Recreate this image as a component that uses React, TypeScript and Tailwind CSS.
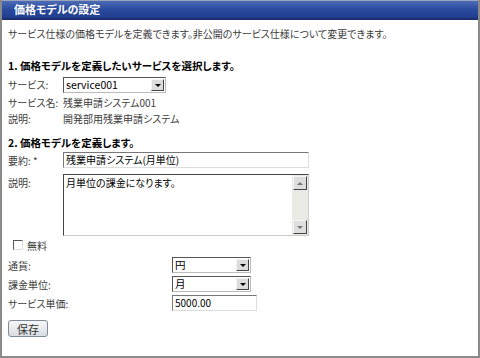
import React from "react";

const FONT = "font-['Noto_Sans_CJK_JP','Liberation_Sans',sans-serif]";

const SelectBox = ({ value, width }: { value: string; width: string }) => (
  <div
    className={`flex h-[16px] items-stretch border border-t-[#555] border-l-[#555] border-b-[#bbb] border-r-[#bbb] bg-white ${width}`}
  >
    <span className="flex-1 pl-[2px] text-[10.5px] leading-[14px] text-black [font-feature-settings:normal]">
      {value}
    </span>
    <span className="m-[1px] flex w-[13px] items-center justify-center border border-t-[#f4f4f4] border-l-[#f4f4f4] border-b-[#444] border-r-[#444] bg-[#dcdcdc]">
      <span className="h-0 w-0 border-x-[3px] border-t-[3px] border-x-transparent border-t-black" />
    </span>
  </div>
);

const TextInput = ({ value, width }: { value: string; width: string }) => (
  <div
    className={`h-[16px] border border-t-[#777] border-l-[#777] border-b-[#ddd] border-r-[#ddd] bg-white pl-[2px] text-[10px] leading-[14px] text-black ${width}`}
  >
    {value}
  </div>
);

const ScrollArrow = ({ up }: { up: boolean }) => (
  <span className="flex h-[14px] w-[14px] items-center justify-center border border-t-[#f4f4f4] border-l-[#f4f4f4] border-b-[#444] border-r-[#444] bg-[#dedede]">
    <span
      className={
        up
          ? "h-0 w-0 border-x-[3px] border-b-[3px] border-x-transparent border-b-[#777]"
          : "h-0 w-0 border-x-[3px] border-t-[3px] border-x-transparent border-t-[#777]"
      }
    />
  </span>
);

export default function App() {
  return (
    <div
      className={`${FONT} h-[358px] w-[480px] whitespace-nowrap bg-white text-[10px] text-[#3c3c3c] [font-feature-settings:'palt']`}
    >
      <div className="flex h-full flex-col border-x-2 border-b-2 border-[#8a8a8a]">
        <div className="flex h-[20px] shrink-0 items-center border-t border-b-2 border-t-[#9aa4b8] border-b-[#1b2f72] bg-gradient-to-b from-[#4d6bb6] via-[#2a4a9e] to-[#213d8c] pl-[12px] text-[11px] font-bold text-white">
          価格モデルの設定
        </div>

        <div className="px-[6px]">
          <p className="mt-[7px] h-[14px] leading-[14px]">
            サービス仕様の価格モデルを定義できます。非公開のサービス仕様について変更できます。
          </p>

          <p className="mt-[18px] h-[14px] text-[10.5px] font-bold leading-[14px] text-black">
            1. 価格モデルを定義したいサービスを選択します。
          </p>

          <div className="mt-[4px] flex flex-col">
            <div className="flex h-[17px] items-start">
              <span className="w-[55px] leading-[16px]">サービス:</span>
              <SelectBox value="service001" width="w-[103px]" />
            </div>
            <div className="flex h-[16px] items-center">
              <span className="w-[55px]">サービス名:</span>
              <span>残業申請システム001</span>
            </div>
            <div className="flex h-[17px] items-center">
              <span className="w-[55px]">説明:</span>
              <span>開発部用残業申請システム</span>
            </div>
          </div>

          <p className="mt-[9px] h-[14px] text-[10.5px] font-bold leading-[14px] text-black">
            2. 価格モデルを定義します。
          </p>

          <div className="mt-[2px] flex items-center">
            <span className="w-[55px]">要約: *</span>
            <TextInput value="残業申請システム(月単位)" width="w-[246px]" />
          </div>

          <div className="mt-[6px] flex items-start">
            <span className="w-[55px] pt-[1px]">説明:</span>
            <div className="flex h-[62px] w-[246px] border border-t-[#444] border-l-[#444] border-b-[#ccc] border-r-[#ccc] bg-white">
              <span className="flex-1 pl-[2px] pt-[1px] text-[10px] leading-[14px] text-black">
                月単位の課金になります。
              </span>
              <div className="flex w-[16px] flex-col justify-between bg-[#ebebe6] p-[1px]">
                <ScrollArrow up />
                <ScrollArrow up={false} />
              </div>
            </div>
          </div>

          <div className="mt-[2px] flex h-[14px] items-center gap-[4px] pl-[5px]">
            <span className="h-[10px] w-[10px] border border-t-[#555] border-l-[#555] border-b-[#ddd] border-r-[#ddd] bg-white" />
            <span>無料</span>
          </div>

          <div className="mt-[5px] flex flex-col gap-[3px]">
            <div className="flex items-center">
              <span className="w-[164px]">通貨:</span>
              <SelectBox value="円" width="w-[79px]" />
            </div>
            <div className="flex items-center">
              <span className="w-[164px]">課金単位:</span>
              <SelectBox value="月" width="w-[79px]" />
            </div>
            <div className="flex items-center">
              <span className="w-[164px]">サービス単価:</span>
              <TextInput value="5000.00" width="w-[85px]" />
            </div>
          </div>

          <button className="mt-[9px] h-[17px] w-[40px] rounded-[3px] border border-[#7d8a99] bg-gradient-to-b from-[#f6f6f6] to-[#d9dde2] text-[11px] leading-[14px] text-[#333]">
            保存
          </button>
        </div>
      </div>
    </div>
  );
}
